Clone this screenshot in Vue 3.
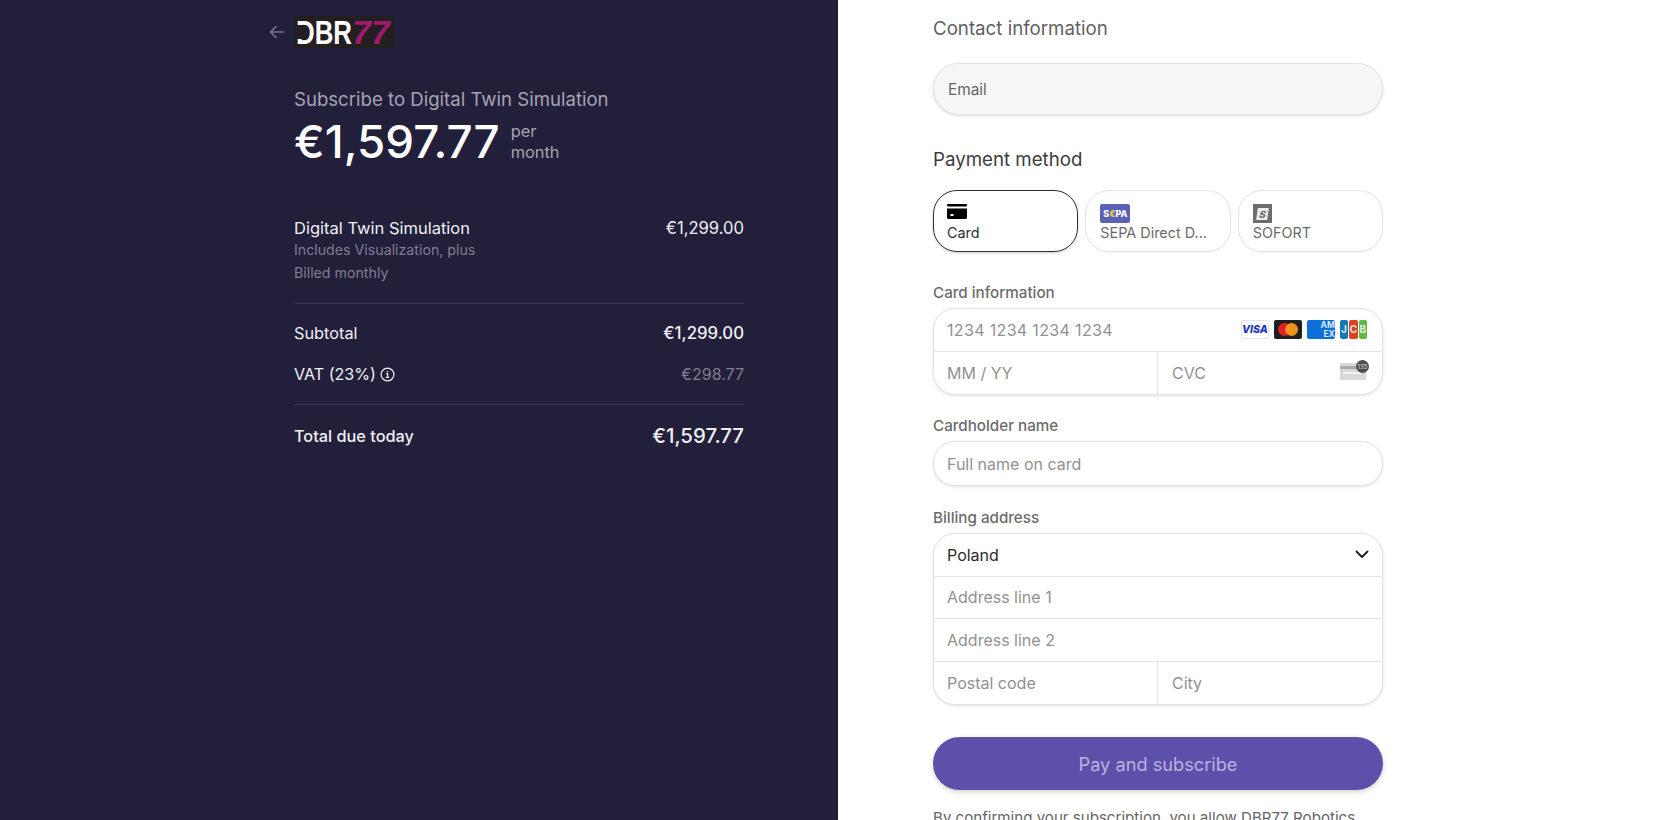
<template>
  <div class="page">
    <section class="summary">
      <header class="brand">
        <svg class="back" width="16" height="14" viewBox="0 0 16 14" fill="none" stroke="currentColor" stroke-width="1.6" stroke-linecap="round" stroke-linejoin="round">
          <path d="M14.5 7H1.5M7 1.5 1.5 7 7 12.5" />
        </svg>
        <div class="logo"><span class="logo-white">DBR</span><span class="logo-pink">77</span></div>
      </header>

      <p class="subscribe">Subscribe to Digital Twin Simulation</p>
      <div class="price">
        <span class="amount">€1,597.77</span>
        <span class="period">per<br />month</span>
      </div>

      <div class="item">
        <div>
          <div class="item-name">Digital Twin Simulation</div>
          <div class="item-note">Includes Visualization, plus</div>
          <div class="item-note billed">Billed monthly</div>
        </div>
        <div class="item-price">€1,299.00</div>
      </div>

      <div class="row subtotal">
        <span>Subtotal</span>
        <span class="strong">€1,299.00</span>
      </div>
      <div class="row vat">
        <span class="vat-label">
          VAT (23%)
          <svg width="15" height="15" viewBox="0 0 15 15" fill="none" stroke="currentColor" stroke-width="1.2">
            <circle cx="7.5" cy="7.5" r="6.4" />
            <path d="M6.2 6.7h1.4v3.6M5.9 10.4h3.2" />
            <path d="M7.5 4v1.2" stroke-width="1.4" />
          </svg>
        </span>
        <span class="vat-value">€298.77</span>
      </div>
      <div class="row total">
        <span>Total due today</span>
        <span class="total-value">€1,597.77</span>
      </div>
    </section>

    <section class="checkout">
      <h2 class="contact-title">Contact information</h2>
      <div class="email">Email</div>

      <h2 class="payment-title">Payment method</h2>
      <div class="tabs">
        <div v-for="tab in tabs" :key="tab.label" class="tab" :class="{ active: tab.active }">
          <svg v-if="tab.icon === 'card'" width="20" height="15" viewBox="0 0 20 15">
            <rect x="0" y="0" width="20" height="2.4" rx="1" fill="#000" />
            <path d="M0 4.4h20v9a1.6 1.6 0 0 1-1.6 1.6H1.6A1.6 1.6 0 0 1 0 13.4z" fill="#000" />
            <rect x="3.5" y="10" width="3" height="2" fill="#fff" />
          </svg>
          <div v-else-if="tab.icon === 'sepa'" class="sepa"><span>S</span><i>€</i><span>PA</span></div>
          <div v-else class="sofort"><span>S</span></div>
          <span class="tab-label">{{ tab.label }}</span>
        </div>
      </div>

      <label class="field-label card-label">Card information</label>
      <div class="box">
        <div class="cell wide card-row">
          <span>1234 1234 1234 1234</span>
          <div class="brands">
            <div class="visa">VISA</div>
            <div class="mc"><i class="mc-red"></i><i class="mc-orange"></i></div>
            <div class="amex"><span>AM<br />EX</span></div>
            <div class="jcb"><b class="j">J</b><b class="c">C</b><b class="b">B</b></div>
          </div>
        </div>
        <div class="split">
          <div class="cell">MM / YY</div>
          <div class="cell cvc">
            <span>CVC</span>
            <div class="cvc-icon"><i class="stripe"></i><i class="sign"></i><i class="badge">135</i></div>
          </div>
        </div>
      </div>

      <label class="field-label name-label">Cardholder name</label>
      <div class="box name-box"><div class="cell">Full name on card</div></div>

      <label class="field-label billing-label">Billing address</label>
      <div class="box">
        <div class="cell wide country">
          <span>Poland</span>
          <svg width="14" height="9" viewBox="0 0 14 9" fill="none" stroke="#1a1a1a" stroke-width="1.8" stroke-linecap="round" stroke-linejoin="round">
            <path d="M1.5 1.5 7 7l5.5-5.5" />
          </svg>
        </div>
        <div class="cell wide">Address line 1</div>
        <div class="cell wide">Address line 2</div>
        <div class="split">
          <div class="cell">Postal code</div>
          <div class="cell">City</div>
        </div>
      </div>

      <button class="pay" type="button">Pay and subscribe</button>
      <p class="legal">By confirming your subscription, you allow DBR77 Robotics to charge your card for this payment and future payments in accordance with their terms.</p>
    </section>
  </div>
</template>

<script setup>
const tabs = [
  { label: 'Card', icon: 'card', active: true },
  { label: 'SEPA Direct D...', icon: 'sepa' },
  { label: 'SOFORT', icon: 'sofort' }
]
</script>

<style>
html,
body {
  margin: 0;
  background: #fff;
  overflow: hidden;
}
</style>

<style scoped>
.page {
  display: flex;
  height: 820px;
  overflow: hidden;
  font-family: Inter, "Liberation Sans", sans-serif;
}

.summary {
  box-sizing: border-box;
  width: 838px;
  height: 820px;
  padding: 16px 94px 0 294px;
  background: #221f3b;
  color: #f0eff3;
}

.brand {
  position: relative;
  height: 32px;
}

.back {
  position: absolute;
  left: -25px;
  top: 9px;
  color: #76738a;
}

.logo {
  position: relative;
  display: flex;
  align-items: center;
  width: 100px;
  height: 32px;
  padding-left: 2px;
  box-sizing: border-box;
  background: #231f20;
  font-family: "Liberation Sans", sans-serif;
  font-size: 34px;
  font-weight: 700;
  line-height: 32px;
}

/* hides the stem of the D, the logo's D is open on the left */
.logo::before {
  content: "";
  position: absolute;
  left: 3px;
  top: 9px;
  width: 6px;
  height: 14px;
  background: #231f20;
  z-index: 1;
}

.logo-white {
  display: inline-block;
  flex: 0 0 56px;
  width: 56px;
  color: #fff;
  transform: scaleX(0.76);
  transform-origin: left center;
  white-space: nowrap;
}

.logo-pink {
  color: #a01a6c;
  font-style: italic;
}

.subscribe {
  margin: 38px 0 0;
  color: #a5a3b2;
  font-size: 18.6px;
  font-weight: 400;
  line-height: 26px;
}

.price {
  display: flex;
  align-items: center;
  margin-top: 2px;
  height: 56px;
}

.amount {
  color: #fff;
  font-size: 45.7px;
  font-weight: 500;
  line-height: 56px;
}

.period {
  margin-left: 11px;
  color: #a5a3b2;
  font-size: 16.4px;
  font-weight: 400;
  line-height: 21.5px;
}

.item {
  display: flex;
  justify-content: space-between;
  margin-top: 46px;
  padding-bottom: 20px;
  border-bottom: 1px solid #393650;
}

.item-name,
.item-price {
  font-size: 16.5px;
  font-weight: 400;
  line-height: 24px;
}

.item-price {
  font-size: 16.6px;
}

.item-note {
  color: #7f7d90;
  font-size: 14.2px;
  line-height: 20px;
}

.billed {
  margin-top: 3px;
}

.row {
  display: flex;
  justify-content: space-between;
  align-items: center;
  font-size: 16.3px;
  font-weight: 400;
  line-height: 24px;
}

.subtotal {
  margin-top: 17px;
}

.strong {
  font-weight: 500;
  font-size: 16.8px;
}

.vat {
  margin-top: 17px;
  padding-bottom: 18px;
  border-bottom: 1px solid #393650;
}

.vat-label {
  display: flex;
  align-items: center;
  gap: 4px;
  font-size: 16.1px;
}

.vat-value {
  color: #7f7d90;
  font-size: 16px;
}

.total {
  margin-top: 19px;
  font-weight: 500;
}

.total-value {
  font-size: 20.4px;
  font-weight: 500;
}

.checkout {
  box-sizing: border-box;
  width: 450px;
  margin-left: 95px;
  color: #1a1a1a;
}

.contact-title,
.payment-title {
  margin: 0;
  font-size: 18.7px;
  font-weight: 400;
  line-height: 26px;
}

.contact-title {
  margin-top: 16px;
  color: #5f5f5f;
}

.email {
  display: flex;
  align-items: center;
  box-sizing: border-box;
  height: 52px;
  margin-top: 21px;
  padding-left: 14px;
  border: 1px solid #e3e3e3;
  border-radius: 26px;
  background: #f6f6f6;
  box-shadow: 0 1px 3px rgba(0, 0, 0, 0.14);
  color: #666;
  font-size: 15.4px;
  font-weight: 400;
}

.payment-title {
  margin-top: 31.5px;
  color: #3c3c3c;
}

.tabs {
  display: grid;
  grid-template-columns: repeat(3, 1fr);
  gap: 7px;
  margin-top: 17.5px;
}

.tab {
  display: flex;
  flex-direction: column;
  align-items: flex-start;
  box-sizing: border-box;
  height: 62px;
  padding: 13px 14px 0;
  border: 1px solid #e3e3e3;
  border-radius: 24px;
  box-shadow: 0 1px 2px rgba(0, 0, 0, 0.05);
  color: #6b6b6b;
}

.tab.active {
  padding-left: 13px;
  border: 1.5px solid #2f2f2f;
  color: #303030;
  box-shadow: 0 1px 3px rgba(0, 0, 0, 0.2);
}

.tab-label {
  position: absolute;
  margin-top: 19px;
  font-size: 14.4px;
  font-weight: 400;
  line-height: 20px;
  white-space: nowrap;
}

.sepa {
  display: flex;
  align-items: center;
  justify-content: center;
  width: 30px;
  height: 19px;
  border-radius: 2px;
  background: #5b62b5;
  color: #fff;
  font-size: 9px;
  font-weight: 800;
  line-height: 19px;
}

.sepa i {
  color: #f3c53c;
  font-style: normal;
}

.sofort {
  display: flex;
  align-items: center;
  justify-content: center;
  width: 19px;
  height: 19px;
  background: #6d6d6d;
  color: #6d6d6d;
  font-size: 10px;
  font-style: italic;
  font-weight: 800;
}

.sofort span {
  display: block;
  width: 11px;
  background: #ececec;
  line-height: 12px;
  text-align: center;
  transform: skewX(-8deg);
}

.field-label {
  display: block;
  color: #6b6b6b;
  font-size: 15.2px;
  font-weight: 500;
  line-height: 20px;
}

.card-label {
  margin-top: 31px;
}

.name-label {
  margin-top: 21px;
}

.billing-label {
  margin-top: 22px;
}

.box {
  margin-top: 5px;
  border: 1px solid #e3e3e3;
  border-radius: 22px;
  box-shadow: 0 1px 3px rgba(0, 0, 0, 0.12);
  overflow: hidden;
  background: #fff;
}

.cell {
  display: flex;
  align-items: center;
  box-sizing: border-box;
  height: 42.5px;
  padding: 0 13px;
  color: #919191;
  font-size: 16px;
}

.name-box .cell {
  height: 43px;
}

.wide {
  justify-content: space-between;
  border-bottom: 1px solid #e3e3e3;
}

.split {
  display: grid;
  grid-template-columns: 223px 1fr;
}

.split .cell + .cell {
  padding-left: 14px;
  border-left: 1px solid #e3e3e3;
}

.card-row {
  padding-right: 15px;
  letter-spacing: 0.34px;
}

.brands {
  display: flex;
  align-items: center;
  gap: 5px;
  letter-spacing: 0;
}

.visa,
.mc,
.amex {
  box-sizing: border-box;
  width: 28px;
  height: 19px;
  border-radius: 2px;
}

.visa {
  border: 1px solid #e6e6e6;
  color: #1a34b8;
  font-size: 10.5px;
  font-style: italic;
  font-weight: 800;
  line-height: 17px;
  text-align: center;
}

.mc {
  position: relative;
  background: #1f1f1f;
}

.mc i {
  position: absolute;
  top: 3px;
  width: 13px;
  height: 13px;
  border-radius: 50%;
}

.mc-red {
  left: 4px;
  background: #e01f26;
}

.mc-orange {
  left: 11px;
  background: #f59a1e;
  opacity: 0.95;
}

.amex {
  background: #0f6fd8;
  color: #d7e9fb;
  font-size: 8.5px;
  font-weight: 700;
  line-height: 8.5px;
  text-align: right;
  padding: 1px 0 0 0;
}

.jcb {
  display: flex;
  gap: 1px;
  height: 19px;
}

.jcb b {
  width: 8.4px;
  border-radius: 2px;
  color: #dfeee4;
  font-size: 10px;
  line-height: 19px;
  text-align: center;
}

.j {
  background: #1179b5;
}

.c {
  background: #e0401f;
}

.b {
  background: #5fb840;
}

.cvc {
  justify-content: space-between;
  padding-right: 16px;
}

.cvc-icon {
  position: relative;
  width: 26px;
  height: 17px;
  margin-top: -3px;
  background: #d8d8d8;
  border-radius: 1px;
}

.stripe {
  position: absolute;
  left: 0;
  right: 0;
  top: 3px;
  height: 3px;
  background: #a9a9a9;
}

.sign {
  position: absolute;
  left: 3px;
  right: 5px;
  top: 9px;
  height: 2px;
  background: #f4f4f4;
}

.badge {
  position: absolute;
  right: -3px;
  top: -3px;
  width: 13px;
  height: 13px;
  border-radius: 50%;
  background: #4f4f4f;
  color: #ddd;
  font-size: 6px;
  font-style: normal;
  line-height: 13px;
  text-align: center;
}

.country {
  color: #2a2a2a;
  font-weight: 400;
}

.pay {
  display: block;
  width: 100%;
  height: 53px;
  margin-top: 32px;
  border: none;
  border-radius: 26.5px;
  background: #5d50aa;
  box-shadow: 0 2px 5px rgba(0, 0, 0, 0.18);
  color: #b9b2df;
  font-family: inherit;
  font-size: 18.2px;
  font-weight: 400;
}

.legal {
  margin: 18px 0 0;
  max-width: 430px;
  color: #666;
  font-size: 15.1px;
  line-height: 20px;
}
</style>
